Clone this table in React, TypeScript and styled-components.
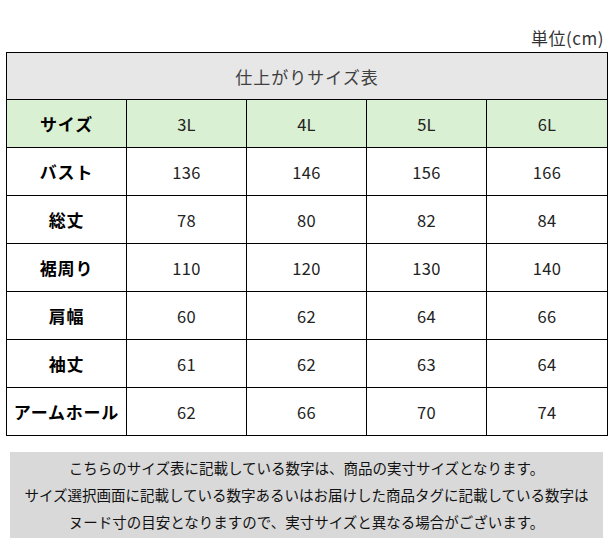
import React from "react";
import styled, { createGlobalStyle } from "styled-components";

const Global = createGlobalStyle`
  html, body { margin: 0; padding: 0; background: #fff; }
  body { font-family: "Noto Sans CJK JP", "Noto Sans", sans-serif; }
`;

const Page = styled.div`
  width: 614px;
  height: 544px;
  display: flex;
  flex-direction: column;
  box-sizing: border-box;
  padding: 26px 0 0 6px;
`;

const Unit = styled.div`
  align-self: flex-end;
  margin-right: 10px;
  height: 26px;
  line-height: 24px;
  font-size: 17px;
  letter-spacing: 0.5px;
  color: #333;
`;

const Table = styled.table`
  border-collapse: collapse;
  width: 601px;
  table-layout: fixed;
`;

const Col = styled.col<{ $w: number }>`
  width: ${(p) => p.$w}px;
`;

const TitleCell = styled.td`
  height: 46px;
  padding: 0;
  border: 1px solid #000;
  background: #e7e7e7;
  text-align: center;
  font-size: 17px;
  letter-spacing: 1px;
  color: #404040;
`;

const Cell = styled.td<{ $head?: boolean; $label?: boolean }>`
  height: 47px;
  padding: 0;
  border: 1px solid #000;
  background: ${(p) => (p.$head ? "#daf0d2" : "#fff")};
  text-align: center;
  font-size: ${(p) => (p.$label ? "17px" : "16.5px")};
  letter-spacing: ${(p) => (p.$label ? "0.8px" : "0.3px")};
  font-weight: ${(p) => (p.$label ? 700 : 400)};
  color: ${(p) => (p.$label ? "#000" : "#222")};
  white-space: nowrap;
`;

const Note = styled.div`
  margin: 16px 0 0 4px;
  width: 593px;
  background: #d9d9d9;
  padding: 2px 0 3px;
  text-align: center;
  font-size: 14.5px;
  line-height: 27px;
  color: #111;
`;

const sizes = ["3L", "4L", "5L", "6L"];
const rows: [string, number[]][] = [
  ["バスト", [136, 146, 156, 166]],
  ["総丈", [78, 80, 82, 84]],
  ["裾周り", [110, 120, 130, 140]],
  ["肩幅", [60, 62, 64, 66]],
  ["袖丈", [61, 62, 63, 64]],
  ["アームホール", [62, 66, 70, 74]],
];

export default function App() {
  return (
    <Page>
      <Global />
      <Unit>単位(cm)</Unit>
      <Table>
        <colgroup>
          <Col $w={120} />
          <Col $w={120} />
          <Col $w={120} />
          <Col $w={120} />
          <Col $w={121} />
        </colgroup>
        <tbody>
          <tr>
            <TitleCell colSpan={5}>仕上がりサイズ表</TitleCell>
          </tr>
          <tr>
            <Cell $head $label>サイズ</Cell>
            {sizes.map((s) => (
              <Cell $head key={s}>{s}</Cell>
            ))}
          </tr>
          {rows.map(([label, vals]) => (
            <tr key={label}>
              <Cell $label>{label}</Cell>
              {vals.map((v, i) => (
                <Cell key={i}>{v}</Cell>
              ))}
            </tr>
          ))}
        </tbody>
      </Table>
      <Note>
        こちらのサイズ表に記載している数字は、商品の実寸サイズとなります。
        <br />
        サイズ選択画面に記載している数字あるいはお届けした商品タグに記載している数字は
        <br />
        ヌード寸の目安となりますので、実寸サイズと異なる場合がございます。
      </Note>
    </Page>
  );
}
